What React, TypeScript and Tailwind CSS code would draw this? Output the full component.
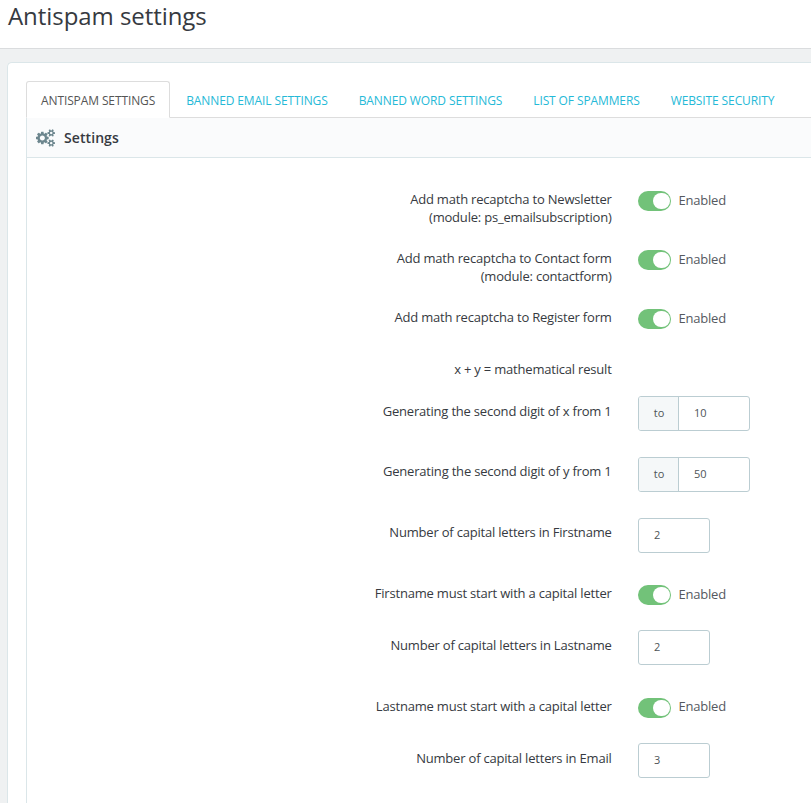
import React, { useState } from "react";

interface Row {
  label: string[];
  type: "switch" | "range" | "number" | "text";
  value?: string;
  height: string;
  labelTop?: string;
  stateTop?: string;
}

const tabs = [
  "Antispam settings",
  "Banned email settings",
  "Banned word settings",
  "List of spammers",
  "Website security",
];

const rows: Row[] = [
  { label: ["Add math recaptcha to Newsletter", "(module: ps_emailsubscription)"], type: "switch", height: "h-[59px]" },
  { label: ["Add math recaptcha to Contact form", "(module: contactform)"], type: "switch", height: "h-[59px]" },
  { label: ["Add math recaptcha to Register form"], type: "switch", height: "h-[52px]" },
  { label: ["x + y = mathematical result"], type: "text", height: "h-[42px]" },
  { label: ["Generating the second digit of x from 1"], type: "range", value: "10", height: "h-[61px]" },
  { label: ["Generating the second digit of y from 1"], type: "range", value: "50", height: "h-[61px]", labelTop: "pt-[5px]" },
  { label: ["Number of capital letters in Firstname"], type: "number", value: "2", height: "h-[60px]", labelTop: "pt-[5px]" },
  { label: ["Firstname must start with a capital letter"], type: "switch", height: "h-[52px]" },
  { label: ["Number of capital letters in Lastname"], type: "number", value: "2", height: "h-[61px]" },
  { label: ["Lastname must start with a capital letter"], type: "switch", height: "h-[52px]", stateTop: "-mt-px" },
  { label: ["Number of capital letters in Email"], type: "number", value: "3", height: "h-[61px]" },
];

const CogsIcon: React.FC = () => (
  <svg viewBox="0 0 1920 1792" className="h-[18px] w-[19px] fill-[#6c868e]">
    <path d="M896 896q0-106-75-181t-181-75-181 75-75 181 75 181 181 75 181-75 75-181zm768 512q0-52-38-90t-90-38-90 38-38 90q0 53 37.5 90.5t90.5 37.5 90.5-37.5 37.5-90.5zm0-1024q0-52-38-90t-90-38-90 38-38 90q0 53 37.5 90.5t90.5 37.5 90.5-37.5 37.5-90.5zm-384 421v185q0 10-7 19.5t-16 10.5l-155 24q-11 35-32 76 34 48 90 115 7 11 7 20 0 12-7 19-23 30-82.5 89.5t-78.5 59.5q-11 0-21-7l-115-90q-37 19-77 31-11 108-23 155-7 24-30 24h-186q-11 0-20-7.5t-10-17.5l-23-153q-34-10-75-31l-118 89q-7 7-20 7-11 0-21-8-144-133-144-160 0-9 7-19 10-14 41-53t47-61q-23-44-35-82l-152-24q-10-1-17-9.5t-7-19.5v-185q0-10 7-19.5t16-10.5l155-24q11-35 32-76-34-48-90-115-7-11-7-20 0-12 7-20 22-30 82-89t79-59q11 0 21 7l115 90q34-18 77-32 11-108 23-154 7-24 30-24h186q11 0 20 7.5t10 17.5l23 153q34 10 75 31l118-89q8-7 20-7 11 0 21 8 144 133 144 160 0 8-7 19-12 16-42 54t-45 60q23 48 34 82l152 23q10 2 17 10.5t7 19.5zm640 533v140q0 16-149 31-12 27-30 52 51 113 51 138 0 4-4 7-122 71-124 71-8 0-46-47t-52-68q-20 2-30 2t-30-2q-14 21-52 68t-46 47q-2 0-124-71-4-3-4-7 0-25 51-138-18-25-30-52-149-15-149-31v-140q0-16 149-31 13-29 30-52-51-113-51-138 0-4 4-7 4-2 35-20t59-34 30-16q8 0 46 46.5t52 67.5q20-2 30-2t30 2q51-71 92-112l6-2q4 0 124 70 4 3 4 7 0 25-51 138 17 23 30 52 149 15 149 31zm0-1024v140q0 16-149 31-12 27-30 52 51 113 51 138 0 4-4 7-122 71-124 71-8 0-46-47t-52-68q-20 2-30 2t-30-2q-14 21-52 68t-46 47q-2 0-124-71-4-3-4-7 0-25 51-138-18-25-30-52-149-15-149-31v-140q0-16 149-31 13-29 30-52-51-113-51-138 0-4 4-7 4-2 35-20t59-34 30-16q8 0 46 46.5t52 67.5q20-2 30-2t30 2q51-71 92-112l6-2q4 0 124 70 4 3 4 7 0 25-51 138 17 23 30 52 149 15 149 31z" />
  </svg>
);

const Switch: React.FC<{ stateTop?: string }> = ({ stateTop = "" }) => {
  const [on, setOn] = useState<boolean>(true);

  return (
    <div className="flex items-start pt-[7px]">
      <button
        type="button"
        onClick={() => setOn(!on)}
        className={`flex h-[19.5px] w-[33px] items-center rounded-full px-[1.5px] ${on ? "justify-end bg-[#72c279]" : "justify-start bg-[#b3c7cd]"}`}
      >
        <span className="h-[16.5px] w-[16.5px] rounded-full bg-white" />
      </button>
      <span className={`ml-[7.5px] text-[13px] leading-[18px] tracking-[-0.22px] text-[#55595f] ${stateTop}`}>
        {on ? "Enabled" : "Disabled"}
      </span>
    </div>
  );
};

const NumberInput: React.FC<{ value?: string; prefix?: string }> = ({ value, prefix }) => (
  <div className="flex h-[35px] overflow-hidden rounded-[3px] border border-[#bbcdd2] bg-white text-[11px] text-[#4e5457]">
    {prefix && (
      <span className="flex w-10 items-center justify-center border-r border-[#bbcdd2] bg-[#f5f8f9] pl-px">{prefix}</span>
    )}
    <input type="text" defaultValue={value} className="w-[70px] px-[15px] outline-none" />
  </div>
);

const App: React.FC = () => {
  const [active, setActive] = useState<number>(0);

  return (
    <div className="h-[803px] w-full overflow-hidden bg-[#eff1f2] font-['Open_Sans',sans-serif] text-[#363a41]">
      <header className="h-[49px] border-b border-[#dadcde] bg-white pl-2">
        <h1 className="text-[24px] leading-[31px] tracking-[-0.06px]">Antispam settings</h1>
      </header>

      <main className="ml-[7px] mt-[13px] h-[760px] rounded-tl-[5px] border-l border-t border-[#dbe6e9] bg-white pl-[18px] pt-[18px]">
        <nav className="flex h-[37px] border-b border-[#ddd] text-[12px]">
          {tabs.map((tab, i) => (
            <button
              key={tab}
              type="button"
              onClick={() => setActive(i)}
              className={`mr-px h-[37px] whitespace-nowrap rounded-t-[3px] border px-[14px] leading-[37px] tracking-[-0.11px] uppercase ${
                active === i ? "border-[#ddd] border-b-white bg-white text-[#555]" : "border-transparent text-[#25b9d7]"
              }`}
            >
              {tab}
            </button>
          ))}
        </nav>

        <section className="h-[700px] border-l border-[#dbe6e9]">
          <div className="flex h-10 items-center border-b border-[#dbe6e9] bg-[#fafbfc] pl-[9px]">
            <CogsIcon />
            <h2 className="ml-[9px] text-[14px] font-semibold tracking-[0.08px]">Settings</h2>
          </div>
          <div className="pt-[26px]">
            {rows.map((row) => (
              <div key={row.label[0]} className={`flex items-start ${row.height}`}>
                <label className={`w-[585px] shrink-0 pr-[0.4px] text-right text-[13px] leading-[18px] tracking-[-0.2px] ${row.labelTop ?? "pt-[6px]"}`}>
                  {row.label.map((line) => (
                    <span key={line} className="block">{line}</span>
                  ))}
                </label>
                <div className="ml-[26px]">
                  {row.type === "switch" && <Switch stateTop={row.stateTop} />}
                  {row.type === "range" && <NumberInput value={row.value} prefix="to" />}
                  {row.type === "number" && <NumberInput value={row.value} />}
                </div>
              </div>
            ))}
          </div>
        </section>
      </main>
    </div>
  );
};

export default App;
